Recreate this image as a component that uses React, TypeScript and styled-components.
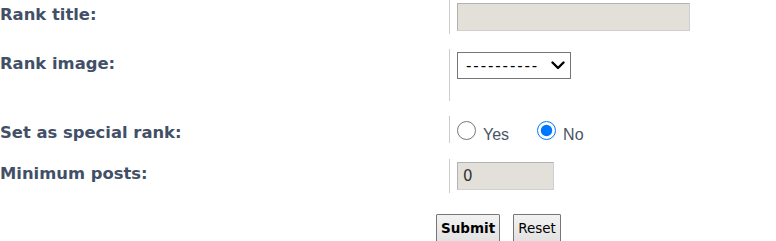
import styled, { createGlobalStyle } from "styled-components";

const GlobalStyle = createGlobalStyle`
  html, body {
    margin: 0;
    padding: 0;
    background: #ffffff;
  }
  body {
    font-family: "DejaVu Sans", Verdana, sans-serif;
  }
`;

const Form = styled.form`
  width: 776px;
  height: 241px;
  overflow: hidden;
`;

const Row = styled.div<{ $gap?: number }>`
  display: flex;
  margin-bottom: ${(p) => p.$gap ?? 15}px;
`;

const Term = styled.div<{ $pad?: number }>`
  width: 449px;
  flex-shrink: 0;
  padding-top: ${(p) => p.$pad ?? 5}px;
  box-sizing: border-box;
`;

const Label = styled.label`
  font-size: 16.4px;
  line-height: 19px;
  font-weight: bold;
  color: #425067;
`;

const Detail = styled.div<{ $minHeight?: number }>`
  border-left: 1px solid #cccccc;
  padding: 3px 0 3px 7px;
  box-sizing: border-box;
  min-height: ${(p) => p.$minHeight ?? 0}px;
  display: flex;
  align-items: flex-start;
`;

const TextBox = styled.input<{ $width: number }>`
  width: ${(p) => p.$width}px;
  height: 28px;
  box-sizing: border-box;
  background: #e3e0da;
  border: 1px solid;
  border-color: #b2b2b2 #cfcfcf #cfcfcf #b2b2b2;
  padding: 0 5px;
  font-family: "DejaVu Sans", Verdana, sans-serif;
  font-size: 15px;
  color: #333333;
  outline: none;
`;

const SelectWrap = styled.div`
  position: relative;
  width: 114px;
  height: 27px;
`;

const Select = styled.select`
  appearance: none;
  width: 100%;
  height: 100%;
  box-sizing: border-box;
  font-family: "DejaVu Sans", Verdana, sans-serif;
  font-size: 15px;
  letter-spacing: 1.9px;
  color: #000000;
  background: #ffffff;
  border: 1px solid #767676;
  border-radius: 0;
  padding: 0 0 0 8px;
`;

const Chevron = styled.svg`
  position: absolute;
  right: 6px;
  top: 9px;
  width: 14px;
  height: 9px;
  pointer-events: none;
`;

const RadioGroup = styled.div`
  display: flex;
  align-items: flex-end;
  padding-top: 2px;
`;

const RadioLabel = styled.label<{ $last?: boolean }>`
  display: flex;
  align-items: flex-end;
  gap: 7px;
  margin-right: ${(p) => (p.$last ? 0 : 28)}px;
  font-family: "Liberation Sans", Arial, sans-serif;
  font-size: 16px;
  line-height: 16px;
  color: #4a5563;
`;

const RadioText = styled.span`
  margin-bottom: -3px;
`;

const Radio = styled.input`
  width: 19px;
  height: 19px;
  margin: 0;
  accent-color: #0075ff;
`;

const Buttons = styled.div`
  display: flex;
  gap: 13px;
  padding-left: 436px;
  margin-top: 21px;
`;

const Button = styled.button<{ $primary?: boolean }>`
  height: 28px;
  box-sizing: border-box;
  padding: 0 4px;
  font-family: "DejaVu Sans", Verdana, sans-serif;
  font-size: 13.5px;
  font-weight: ${(p) => (p.$primary ? "bold" : "normal")};
  color: #000000;
  background: linear-gradient(#f2f2f2, #e2e2e2);
  border: 1px solid #767676;
  border-radius: 1px;
`;

export default function App() {
  return (
    <>
      <GlobalStyle />
      <Form onSubmit={(e) => e.preventDefault()}>
        <Row>
          <Term>
            <Label htmlFor="title">Rank title:</Label>
          </Term>
          <Detail>
            <TextBox id="title" type="text" $width={233} defaultValue="" />
          </Detail>
        </Row>
        <Row>
          <Term>
            <Label htmlFor="rank_image">Rank image:</Label>
          </Term>
          <Detail $minHeight={52}>
            <SelectWrap>
              <Select id="rank_image" defaultValue="">
                <option value="">----------</option>
              </Select>
              <Chevron viewBox="0 0 14 9">
                <path
                  d="M1.5 1.5 L7 7 L12.5 1.5"
                  fill="none"
                  stroke="#000"
                  strokeWidth="2.4"
                  strokeLinecap="round"
                  strokeLinejoin="round"
                />
              </Chevron>
            </SelectWrap>
          </Detail>
        </Row>
        <Row $gap={16}>
          <Term $pad={7}>
            <Label>Set as special rank:</Label>
          </Term>
          <Detail>
            <RadioGroup>
              <RadioLabel>
                <Radio type="radio" name="special_rank" value="1" />
                <RadioText>Yes</RadioText>
              </RadioLabel>
              <RadioLabel $last>
                <Radio type="radio" name="special_rank" value="0" defaultChecked />
                <RadioText>No</RadioText>
              </RadioLabel>
            </RadioGroup>
          </Detail>
        </Row>
        <Row $gap={0}>
          <Term>
            <Label htmlFor="min_posts">Minimum posts:</Label>
          </Term>
          <Detail>
            <TextBox id="min_posts" type="text" $width={97} defaultValue="0" />
          </Detail>
        </Row>
        <Buttons>
          <Button type="submit" $primary>
            Submit
          </Button>
          <Button type="reset">Reset</Button>
        </Buttons>
      </Form>
    </>
  );
}
